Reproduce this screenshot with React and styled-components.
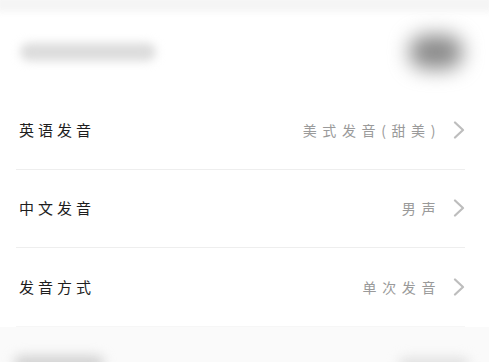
import React from "react";
import styled, { createGlobalStyle } from "styled-components";

const Global = createGlobalStyle`
  html, body { margin: 0; padding: 0; background: #ffffff; }
  body { font-family: "Noto Sans CJK SC", "Noto Sans", sans-serif; }
  #root { width: 489px; height: 362px; overflow: hidden; }
`;

const Page = styled.div`
  width: 489px;
  height: 362px;
  display: flex;
  flex-direction: column;
  background: #ffffff;
  overflow: hidden;
`;

const TopStrip = styled.div`
  height: 16px;
  background: #f5f5f5;
  filter: blur(3px);
  margin: -4px -4px 0;
`;

const BlurHeader = styled.div`
  height: 79px;
  display: flex;
  align-items: center;
  justify-content: space-between;
  padding: 0 26px 0 20px;
`;

const BlurBar = styled.div`
  width: ${(p) => p.$w}px;
  height: ${(p) => p.$h}px;
  border-radius: ${(p) => p.$r}px;
  background: ${(p) => p.$c};
  filter: blur(${(p) => p.$b}px);
`;

const List = styled.div`
  display: flex;
  flex-direction: column;
`;

const Row = styled.div`
  height: 77.5px;
  display: flex;
  align-items: center;
  border-bottom: 1px solid ${(p) => (p.$faint ? "#f6f6f6" : "#eeeeee")};
  margin: 0 24px 0 16px;
  padding: 0 0 0 3px;
`;

const Label = styled.span`
  flex: 1;
  font-size: 15px;
  letter-spacing: 4px;
  color: #1e1e1e;
  line-height: 20px;
`;

const Value = styled.span`
  font-size: 14px;
  letter-spacing: 5.6px;
  color: #9a9a9a;
  line-height: 20px;
  margin-right: 12px;
`;

const Chevron = () => (
  <svg width="12" height="18" viewBox="0 0 12 18" fill="none">
    <path d="M2 1.5 L10 9 L2 16.5" stroke="#bdbdbd" strokeWidth="2.2" strokeLinecap="round" strokeLinejoin="round" />
  </svg>
);

const Bottom = styled.div`
  flex: 1;
  background: #fafafa;
  display: flex;
  justify-content: space-between;
  align-items: flex-end;
  padding: 0 20px 0 14px;
`;

const rows = [
  { label: "英语发音", value: "美式发音(甜美)" },
  { label: "中文发音", value: "男声" },
  { label: "发音方式", value: "单次发音", faint: true },
];

export default function App() {
  return (
    <Page>
      <Global />
      <TopStrip />
      <BlurHeader>
        <BlurBar $w={136} $h={18} $r={9} $c="#dcdcdc" $b={5} />
        <BlurBar $w={54} $h={34} $r={17} $c="#8a8a8a" $b={10} />
      </BlurHeader>
      <List>
        {rows.map((r) => (
          <Row key={r.label} $faint={r.faint}>
            <Label>{r.label}</Label>
            <Value>{r.value}</Value>
            <Chevron />
          </Row>
        ))}
      </List>
      <Bottom>
        <BlurBar $w={90} $h={14} $r={7} $c="#cfcfcf" $b={6} style={{ marginBottom: -8 }} />
        <BlurBar $w={70} $h={12} $r={6} $c="#dedede" $b={6} style={{ marginBottom: -8 }} />
      </Bottom>
    </Page>
  );
}
